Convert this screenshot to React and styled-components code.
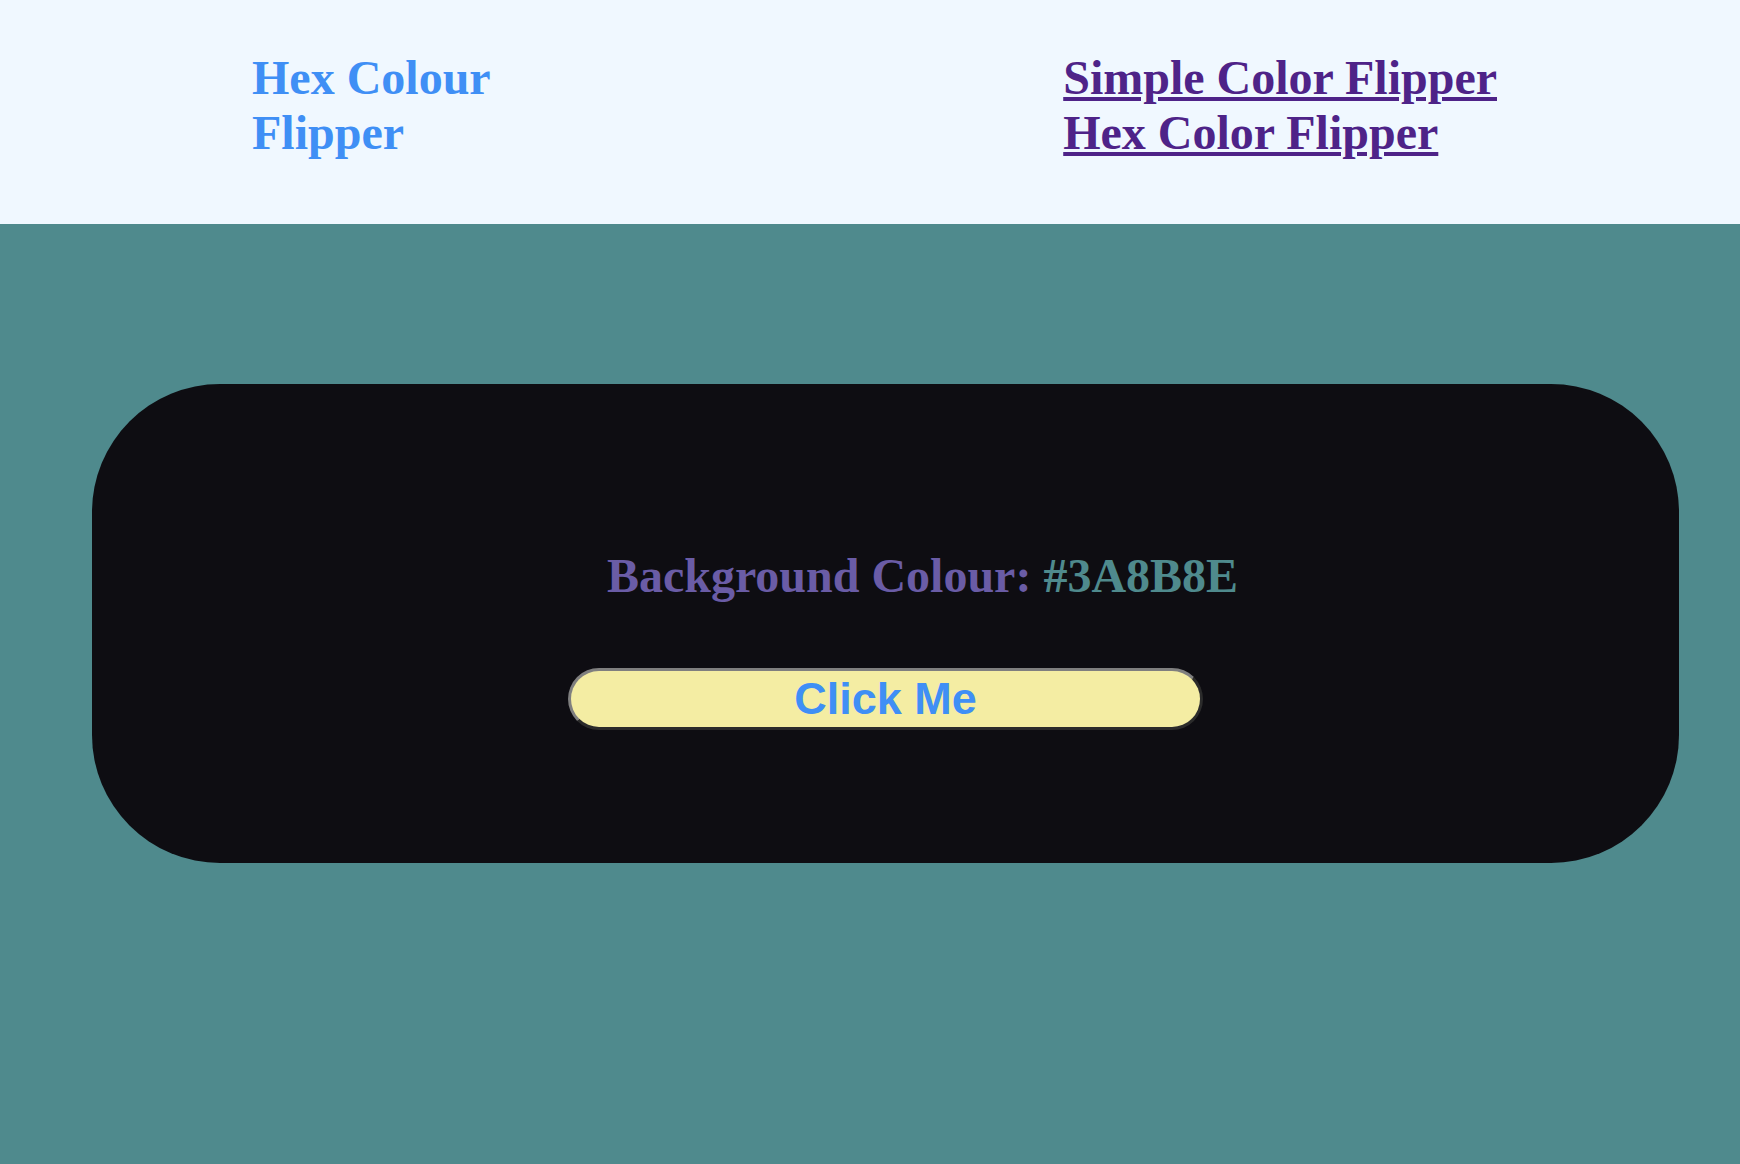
import styled, { createGlobalStyle } from "styled-components";
import { useState } from "react";

const GlobalStyle = createGlobalStyle`
    body {
        margin: 0;
        min-height: 100vh;
        background: ${(props) => props.bg};
        font-family: "Liberation Serif", "Times New Roman", serif;
    }
`;

const App = () => {
    const [colour, setColour] = useState("#3A8B8E");

    const flip = () => {
        const hex = "0123456789ABCDEF";
        let next = "#";
        for (let i = 0; i < 6; i++) {
            next += hex[Math.floor(Math.random() * 16)];
        }
        setColour(next);
    };

    return (
        <>
            <GlobalStyle bg="#4F8A8D" />
            <Header>
                <Title>Hex Colour Flipper</Title>
                <Nav>
                    <a href="#simple">Simple Color Flipper</a>
                    <a href="#hex">Hex Color Flipper</a>
                </Nav>
            </Header>

            <Card>
                <Stack>
                    <Heading>
                        Background Colour: <Hex>{colour}</Hex>
                    </Heading>
                    <Button onClick={flip}>Click Me</Button>
                </Stack>
            </Card>
        </>
    );
};

const Header = styled.header`
    display: flex;
    align-items: flex-start;
    height: 224px;
    box-sizing: border-box;
    padding: 50px 243px 0 252px;
    background: #f0f8ff;
`;

const Title = styled.h1`
    width: 300px;
    margin: 0;
    font-size: 48px;
    font-weight: 700;
    line-height: normal;
    color: #3f8ff5;
`;

const Nav = styled.nav`
    display: flex;
    flex-direction: column;
    margin-left: auto;

    a {
        font-size: 48px;
        font-weight: 700;
        line-height: normal;
        color: #4e2388;
        text-decoration: underline;
    }
`;

const Card = styled.main`
    margin: 160px 61px 0 92px;
    height: 479px;
    box-sizing: border-box;
    padding-top: 164px;
    background: #0e0d12;
    border-radius: 128px;
`;

const Stack = styled.div`
    display: flex;
    flex-direction: column;
    align-items: center;
    gap: 65px;
`;

const Heading = styled.h2`
    margin: 0 0 0 74px;
    font-size: 48px;
    font-weight: 700;
    line-height: normal;
    white-space: nowrap;
    color: #6a5ca6;
`;

const Hex = styled.span`
    color: #4f8a8d;
`;

const Button = styled.button`
    width: 635px;
    padding: 2px 0;
    border: 3px solid;
    border-color: #7f7f7f #2b2b2b #2b2b2b #7f7f7f;
    border-radius: 32px;
    background: #f4eda3;
    font-family: "Liberation Sans", Arial, sans-serif;
    font-size: 45px;
    font-weight: 700;
    line-height: normal;
    color: #3f8ff5;
    cursor: pointer;
`;

export default App;
